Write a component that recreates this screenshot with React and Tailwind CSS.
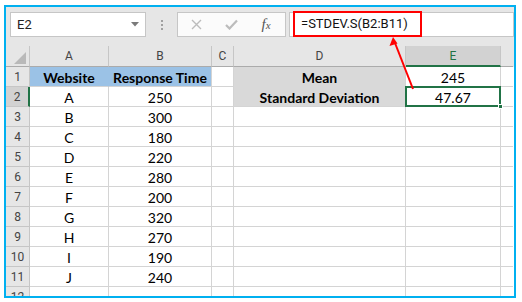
import React from 'react'

const rows = [
  ['A', 250],
  ['B', 300],
  ['C', 180],
  ['D', 220],
  ['E', 280],
  ['F', 200],
  ['G', 320],
  ['H', 270],
  ['I', 190],
  ['J', 240],
]

function RowHead({ n, active }) {
  return (
    <div
      className={
        active
          ? 'w-[24px] h-full flex items-center justify-center bg-[#d2d2d2] border-r-2 border-r-[#217346] border-b border-b-[#c6c6c6] text-[12px] text-[#444]'
          : 'w-[24px] h-full flex items-center justify-center bg-[#e6e6e6] border-r border-b border-[#c6c6c6] text-[12px] text-[#444]'
      }
      style={{ fontFamily: 'Roboto, sans-serif' }}
    >
      {n}
    </div>
  )
}

function App() {
  return (
    <div className="w-[522px] h-[302px] bg-white pt-[5px] pl-[4px]">
      <div className="w-[512px] h-[293px] border-2 border-[#00b0f0] bg-[#e6e6e6] overflow-hidden relative">
        {/* formula toolbar */}
        <div className="h-[39px] flex items-start pt-[5px] pl-[4px]" style={{ fontFamily: 'Roboto, sans-serif' }}>
          <div className="w-[136px] h-[25px] bg-white border border-[#c6c6c6] flex items-center pl-[6px] pr-[6px] text-[13px] text-[#222]">
            <span className="flex-1">E2</span>
            <svg width="8" height="5" viewBox="0 0 8 5">
              <polygon points="0,0 8,0 4,4.5" fill="#7a7a7a" />
            </svg>
          </div>
          <div className="w-[31px] h-[25px] flex flex-col items-center justify-center gap-[2px]">
            <div className="w-[2px] h-[2px] bg-[#a0a0a0]" />
            <div className="w-[2px] h-[2px] bg-[#a0a0a0]" />
            <div className="w-[2px] h-[2px] bg-[#a0a0a0]" />
          </div>
          <div className="w-[109px] h-[25px] bg-[#fbfbfb] border border-[#c6c6c6] flex items-center">
            <div className="w-[36px] flex justify-center">
              <svg width="11" height="11" viewBox="0 0 11 11">
                <path d="M1 1 L10 10 M10 1 L1 10" stroke="#bcbcbc" strokeWidth="1.4" fill="none" />
              </svg>
            </div>
            <div className="w-[34px] flex justify-center">
              <svg width="13" height="11" viewBox="0 0 13 11">
                <path d="M1 6 L4.5 9.5 L12 1.5" stroke="#bcbcbc" strokeWidth="2.2" fill="none" />
              </svg>
            </div>
            <div className="w-[36px] flex justify-center items-baseline text-[#555] italic" style={{ fontFamily: '"Liberation Serif", serif' }}>
              <span className="text-[15px]">f</span>
              <span className="text-[11px]">x</span>
            </div>
          </div>
          <div className="ml-[3px] flex-1 h-[25px] bg-white border border-[#c6c6c6] flex items-center pl-[3px]">
            <div className="w-[129px] h-[26px] -mt-[1px] border-2 border-[#ff0000] flex items-center pl-[6px] text-[13px] text-[#111]">
              =STDEV.S(B2:B11)
            </div>
          </div>
        </div>

        {/* column headers */}
        <div className="flex h-[21px] text-[12px] text-[#444]" style={{ fontFamily: 'Roboto, sans-serif' }}>
          <div className="w-[24px] h-full border-r border-b border-[#c6c6c6] border-b-[#ababab] flex items-end justify-end pr-[3px] pb-[2px]">
            <svg width="12" height="12" viewBox="0 0 12 12">
              <polygon points="0,12 12,0 12,12" fill="#b9b9b9" />
            </svg>
          </div>
          <div className="w-[79px] h-full border-r border-b border-[#c6c6c6] border-b-[#ababab] flex items-center justify-center">A</div>
          <div className="w-[103px] h-full border-r border-b border-[#c6c6c6] border-b-[#ababab] flex items-center justify-center">B</div>
          <div className="w-[22px] h-full border-r border-b border-[#c6c6c6] border-b-[#ababab] flex items-center justify-center">C</div>
          <div className="w-[172px] h-full border-r border-b border-[#c6c6c6] border-b-[#ababab] flex items-center justify-center">D</div>
          <div className="w-[95px] h-full border-r border-[#c6c6c6] border-b-2 border-b-[#217346] bg-[#d2d2d2] text-[#217346] flex items-center justify-center">E</div>
          <div className="w-[12px] h-full border-b border-[#ababab]" />
        </div>

        {/* sheet body */}
        <div className="bg-white text-[14px] text-black" style={{ fontFamily: 'Lato, sans-serif' }}>
          <div className="flex h-[20px]">
            <RowHead n={1} />
            <div className="w-[79px] h-full bg-[#9bc2e6] border-r border-r-[#9bc2e6] border-b border-b-[#d4d4d4] flex items-center justify-center font-bold pt-[1px]">Website</div>
            <div className="w-[103px] h-full bg-[#9bc2e6] border-r border-b border-[#d4d4d4] flex items-center justify-center font-bold pt-[1px]">Response Time</div>
            <div className="w-[22px] h-full border-r border-b border-[#d4d4d4]" />
            <div className="w-[172px] h-full bg-[#d9d9d9] border-r border-r-[#d4d4d4] border-b border-b-[#d9d9d9] flex items-center justify-center font-bold pt-[1px]">Mean</div>
            <div className="w-[95px] h-full border-r border-b border-[#d4d4d4] flex items-center justify-center pt-[1px]">245</div>
            <div className="w-[12px] h-full border-b border-[#d4d4d4]" />
          </div>
          <div className="flex h-[20px]">
            <RowHead n={2} active />
            <div className="w-[79px] h-full border-r border-b border-[#d4d4d4] flex items-center justify-center pt-[1px]">A</div>
            <div className="w-[103px] h-full border-r border-b border-[#d4d4d4] flex items-center justify-center pt-[1px]">250</div>
            <div className="w-[22px] h-full border-r border-b border-[#d4d4d4]" />
            <div className="w-[172px] h-full bg-[#d9d9d9] border-r border-b border-[#d4d4d4] flex items-center justify-center font-bold pt-[1px]">Standard Deviation</div>
            <div className="w-[95px] h-full border-r border-b border-[#d4d4d4] flex items-center justify-center relative pt-[1px]">
              47.67
              <div className="absolute -left-[1px] -top-[1px] w-[96px] h-[21px] border-2 border-[#217346]" />
              <div className="absolute -right-[3px] bottom-[-3px] w-[5px] h-[5px] bg-[#217346] border border-white" />
            </div>
            <div className="w-[12px] h-full border-b border-[#d4d4d4]" />
          </div>
          {rows.slice(1).map(([w, t], i) => (
            <div key={w} className="flex h-[20px]">
              <RowHead n={i + 3} />
              <div className="w-[79px] h-full border-r border-b border-[#d4d4d4] flex items-center justify-center pt-[1px]">{w}</div>
              <div className="w-[103px] h-full border-r border-b border-[#d4d4d4] flex items-center justify-center pt-[1px]">{t}</div>
              <div className="w-[22px] h-full border-r border-b border-[#d4d4d4]" />
              <div className="w-[172px] h-full border-r border-b border-[#d4d4d4]" />
              <div className="w-[95px] h-full border-r border-b border-[#d4d4d4]" />
              <div className="w-[12px] h-full border-b border-[#d4d4d4]" />
            </div>
          ))}
          <div className="flex h-[20px]">
            <RowHead n={12} />
            <div className="w-[79px] h-full border-r border-[#d4d4d4]" />
            <div className="w-[103px] h-full border-r border-[#d4d4d4]" />
            <div className="w-[22px] h-full border-r border-[#d4d4d4]" />
            <div className="w-[172px] h-full border-r border-[#d4d4d4]" />
            <div className="w-[95px] h-full border-r border-[#d4d4d4]" />
          </div>
        </div>

        {/* annotation arrow */}
        <svg className="absolute left-0 top-0 pointer-events-none" width="507" height="288" viewBox="0 0 507 288">
          <line x1="407" y1="82" x2="389" y2="36" stroke="#ff0000" strokeWidth="2" />
          <polygon points="387,30 383.5,39 391.5,36.5" fill="#ff0000" />
        </svg>
      </div>
    </div>
  )
}

export default App
